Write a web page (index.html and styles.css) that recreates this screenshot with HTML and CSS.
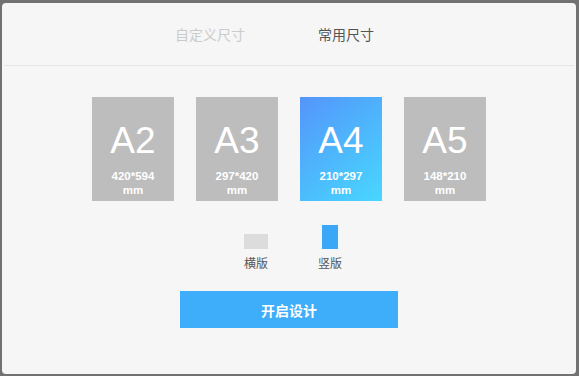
FILE: index.html
```html
<!DOCTYPE html>
<html lang="zh-CN">
<head>
    <meta charset="UTF-8">
    <meta name="viewport" content="width=device-width, initial-scale=1.0">
    <title>选择尺寸</title>
    <link rel="stylesheet" href="styles.css">
</head>
<body>
    <div class="dialog">
        <div class="tabs">
            <span class="tab">自定义尺寸</span>
            <span class="tab active">常用尺寸</span>
        </div>
        <div class="cards">
            <div class="card">
                <div class="name">A2</div>
                <div class="size">420*594<br>mm</div>
            </div>
            <div class="card">
                <div class="name">A3</div>
                <div class="size">297*420<br>mm</div>
            </div>
            <div class="card selected">
                <div class="name">A4</div>
                <div class="size">210*297<br>mm</div>
            </div>
            <div class="card">
                <div class="name">A5</div>
                <div class="size">148*210<br>mm</div>
            </div>
        </div>
        <div class="orient">
            <div class="opt">
                <div class="swatch wide"></div>
                <span>横版</span>
            </div>
            <div class="opt">
                <div class="swatch tall"></div>
                <span>竖版</span>
            </div>
        </div>
        <button class="start">开启设计</button>
    </div>
</body>
</html>
```

FILE: styles.css
```css
html, body {
    margin: 0;
    height: 100%;
}

body {
    box-sizing: border-box;
    padding: 3px 3px 2px 2px;
    background: #727272;
    font-family: "Liberation Sans", "Noto Sans CJK SC", sans-serif;
}

.dialog {
    height: 100%;
    background: #f6f6f6;
    border-radius: 4px;
    display: flex;
    flex-direction: column;
    align-items: center;
}

.tabs {
    align-self: stretch;
    height: 63px;
    margin: 0 2px;
    border-bottom: 1px solid #e6e6e6;
    display: flex;
    justify-content: center;
    align-items: center;
    gap: 73px;
    padding-right: 29px;
    padding-bottom: 1px;
    box-sizing: border-box;
}

.tab {
    font-size: 14px;
    color: #cbcbcb;
}

.tab.active {
    color: #555;
}

.cards {
    display: flex;
    gap: 22px;
    margin-top: 31px;
}

.card {
    width: 82px;
    height: 104px;
    background: #bdbdbd;
    color: #fff;
    text-align: center;
    box-sizing: border-box;
    padding-top: 24px;
}

.card.selected {
    background: linear-gradient(140deg, #5495fb 0%, #4bc4fd 70%, #49d6ff 100%);
}

.name {
    font-size: 37px;
    line-height: 40px;
}

.size {
    margin-top: 8px;
    font-size: 11.5px;
    line-height: 14px;
    font-weight: bold;
}

.orient {
    display: flex;
    gap: 50px;
    margin-top: 23px;
    margin-left: 8px;
}

.opt {
    width: 24px;
    display: flex;
    flex-direction: column;
    align-items: center;
    justify-content: flex-end;
    height: 47px;
    font-size: 12px;
    color: #555;
}

.opt span {
    margin-top: 8px;
    white-space: nowrap;
    line-height: 14px;
}

.swatch {
    background: #dcdcdc;
}

.swatch.wide {
    width: 24px;
    height: 15px;
}

.swatch.tall {
    width: 16px;
    height: 24px;
    background: #3aa8f7;
}

.start {
    margin-top: 20px;
    width: 218px;
    height: 37px;
    border: none;
    background: #3eaefa;
    color: #fff;
    font-family: "Liberation Sans", "Noto Sans CJK SC", sans-serif;
    font-size: 14px;
    font-weight: bold;
    padding: 0;
}
```
